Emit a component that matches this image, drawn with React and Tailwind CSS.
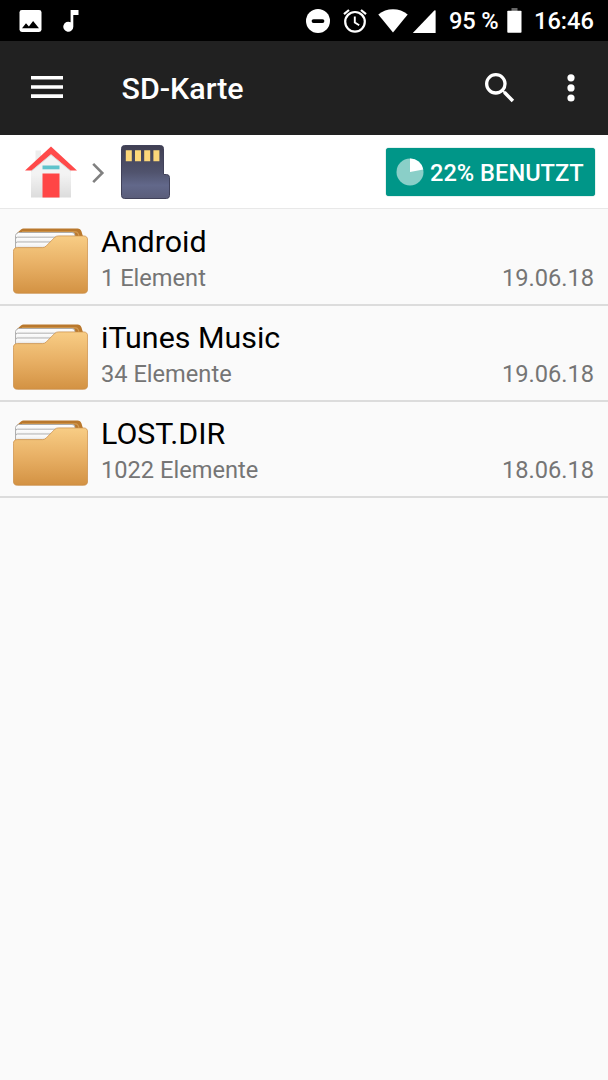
import React from 'react';

const files = [{
  name: 'Android',
  count: '1 Element',
  date: '19.06.18'
}, {
  name: 'iTunes Music',
  count: '34 Elemente',
  date: '19.06.18'
}, {
  name: 'LOST.DIR',
  count: '1022 Elemente',
  date: '18.06.18'
}];

function StatusBar() {
  return <div className="flex h-[41px] items-center bg-black pl-[19px] text-white">
      <svg className="h-[22px] w-[23px] shrink-0" viewBox="0 0 23 22">
        <rect x="0.5" y="0" width="22" height="22" rx="2.4" fill="#fff" />
        <path d="M3 18.3 7 13.2 9.9 16.6 14.1 11 20 18.3Z" fill="#000" />
      </svg>
      <svg className="ml-[21px] h-[22px] w-[16px] shrink-0" viewBox="0 0 16 22">
        <path d="M7.6 0v12.3a5 5 0 1 0 2.7 4.5V5H15.5V0Z" fill="#fff" />
      </svg>
      <svg className="ml-[227px] h-[24px] w-[24px] shrink-0" viewBox="0 0 24 24">
        <circle cx="12" cy="12" r="12" fill="#fff" />
        <rect x="5.6" y="10.2" width="12.8" height="3.8" rx="1.9" fill="#000" />
      </svg>
      <svg className="ml-[13px] h-[24px] w-[24px] shrink-0" viewBox="0 0 24 24" fill="none" stroke="#fff">
        <circle cx="12" cy="12.8" r="9.8" strokeWidth="2.2" />
        <path d="M11.8 7.5v6l4.4 2.8" strokeWidth="1.9" />
        <path d="M1 5.2 6 1M23 5.2 18 1" strokeWidth="2.2" />
      </svg>
      <svg className="ml-[11px] h-[24px] w-[30px] shrink-0" viewBox="0 0 30 24">
        <path d="M0.3 5.4C4.5 1.9 9.5.2 15 .2s10.5 1.7 14.7 5.2L15 23.4Z" fill="#fff" />
      </svg>
      <svg className="ml-[4px] h-[24px] w-[24px] shrink-0" viewBox="0 0 24 24">
        <path d="M.8 24 22.3 1.6Q23.6.5 23.6 2V24Z" fill="#fff" />
      </svg>
      <span className="ml-[13px] w-[50px] shrink-0 pt-px text-[23.64px] leading-[40px] font-medium tracking-[-0.2px] whitespace-nowrap">95 %</span>
      <svg className="ml-[8px] h-[25px] w-[15px] shrink-0" viewBox="0 0 15 25">
        <rect x="4.5" y="0" width="6" height="3" fill="#666" />
        <rect x="0.3" y="2.7" width="14.2" height="22" rx="0.8" fill="#fff" />
      </svg>
      <span className="ml-[12px] pt-px text-[23.64px] leading-[40px] font-medium whitespace-nowrap">16:46</span>
    </div>;
}

function Toolbar() {
  return <header className="flex h-[94px] items-center bg-[#212121] pl-[31px] text-white">
      <svg className="mb-[2px] h-[22px] w-[32px] shrink-0" viewBox="0 0 32 22">
        <path d="M0 0h32v3.6H0zM0 9.2h32v3.6H0zM0 18.3h32v3.6H0z" fill="#fff" />
      </svg>
      <h1 className="ml-[58.5px] flex-1 pt-[2px] text-[30.4px] leading-[36px] font-medium">SD-Karte</h1>
      <svg className="h-[40px] w-[40px] shrink-0" viewBox="0 0 24 24">
        <path d="M15.5 14h-.79l-.28-.27A6.471 6.471 0 0 0 16 9.5 6.5 6.5 0 1 0 9.5 16c1.61 0 3.09-.59 4.23-1.57l.27.28v.79l5 4.99L20.49 19l-4.99-5zm-6 0C7.01 14 5 11.99 5 9.5S7.01 5 9.5 5 14 7.01 14 9.5 11.99 14 9.5 14z" fill="#fff" />
      </svg>
      <svg className="mr-[33px] ml-[47px] h-[28px] w-[8px] shrink-0" viewBox="0 0 8 28">
        <circle cx="4" cy="3.8" r="3.6" fill="#fff" />
        <circle cx="4" cy="13.9" r="3.6" fill="#fff" />
        <circle cx="4" cy="24" r="3.6" fill="#fff" />
      </svg>
    </header>;
}

function HomeIcon() {
  return <svg className="mt-px h-[52px] w-[52px] shrink-0" viewBox="0 0 52 52">
      <defs>
        <linearGradient id="wall" x1="0" y1="0" x2="0" y2="1">
          <stop offset="0.5" stopColor="#f3f3f3" />
          <stop offset="1" stopColor="#dcdcdc" />
        </linearGradient>
      </defs>
      <path d="M10.5 4.5h5.5v12h-5.5z" fill="#ededed" />
      <path d="M26 5 46 22v29.500H6V22Z" fill="url(#wall)" />
      <path d="M0 24.400 26 .5 52 24.400h-6.5L26 8.200 6.5 24.400Z" fill="#ff4a4a" />
      <path d="M6.5 25 26 8.8l19.5 16.200" fill="none" stroke="#c9c9c9" strokeOpacity="0.6" />
      <path d="M17.5 19.5h17v3.8h-17z" fill="#5fc3cb" />
      <path d="M17.5 27.5h17v24h-17z" fill="#ff4646" />
    </svg>;
}

function SdIcon() {
  return <svg className="h-[54px] w-[49px] shrink-0" viewBox="0 0 49 54">
      <defs>
        <linearGradient id="card" x1="0" y1="0" x2="0" y2="1">
          <stop offset="0" stopColor="#403f52" />
          <stop offset="0.5" stopColor="#50536d" />
          <stop offset="0.75" stopColor="#62688a" />
          <stop offset="1" stopColor="#5a5d7a" />
        </linearGradient>
      </defs>
      <path d="M3.5.5h36q3 0 3 3v26h3q3 0 3 3V50.5q0 3-3 3h-42q-3 0-3-3v-47q0-3 3-3Z" fill="url(#card)" stroke="#41425a" />
      <path d="M4.8 5.2h6v11h-6zM14 5.2h6v11h-6zM23.2 5.2h6v11h-6zM32.4 5.2h6v11h-6z" fill="#fcd779" />
    </svg>;
}

function Breadcrumbs() {
  return <nav className="flex h-[74px] items-center border-b border-[#e8e8e8] bg-white pr-[13px] pl-[25px]">
      <HomeIcon />
      <svg className="mt-[2px] ml-[15px] h-[22px] w-[13px] shrink-0" viewBox="0 0 13 22">
        <path d="M1.2 1.8 10.3 11 1.2 20.2" fill="none" stroke="#808080" strokeWidth="2.6" />
      </svg>
      <div className="ml-[16px]">
        <SdIcon />
      </div>
      <button className="mt-px ml-auto flex h-[48px] w-[209px] items-center rounded-[3px] bg-[#009688] pl-[10px] text-white shadow-[0_0_1px_#00796b]">
        <svg className="h-[28px] w-[28px] shrink-0" viewBox="0 0 28 28">
          <circle cx="14" cy="14" r="13.5" fill="#8acfc8" />
          <path d="M14 14V.5A13.5 13.5 0 0 1 27.26 11.47Z" fill="#fff" />
        </svg>
        <span className="ml-[6px] pt-[2px] text-[23.64px] leading-[36px] font-medium whitespace-nowrap">22% BENUTZT</span>
      </button>
    </nav>;
}

function FolderIcon() {
  return <svg className="h-[66px] w-[75px] shrink-0" viewBox="0 0 75 66">
      <defs>
        <linearGradient id="front" x1="0" y1="0" x2="0" y2="1">
          <stop offset="0" stopColor="#f8cd85" />
          <stop offset="0.5" stopColor="#e8b065" />
          <stop offset="1" stopColor="#d39243" />
        </linearGradient>
        <linearGradient id="paper" x1="0" y1="0" x2="0" y2="1">
          <stop offset="0" stopColor="#fff" />
          <stop offset="0.4" stopColor="#f4f4f4" />
          <stop offset="1" stopColor="#c2c2c2" />
        </linearGradient>
      </defs>
      <path d="M4 5 8 1.500Q9 .5 10.500 .5h54q3 0 4 3l1.500 5v4H4Z" fill="#b9782d" />
      <path d="M9 3.8h53.500q3 0 3.500 5" fill="none" stroke="#d29a52" strokeWidth="1.2" />
      <g fill="url(#paper)" stroke="#a8a8a8" strokeWidth="0.9">
        <path d="M5.5 4.5h53.5q3 0 3 3v10H2.5v-10q0-2 3-3Z" />
        <path d="M4.5 9.200h42v10H2.5v-8q0-2 2-2Z" />
        <path d="M4.5 14h38v9H2.5v-7q0-2 2-2Z" />
      </g>
      <path d="M4.5 19.6H29.500Q31.500 19.6 33 18.200L41.700 9.400Q43.200 7.9 45.500 7.9H70.5Q74.6 7.9 74.6 12V61Q74.6 65.3 70.5 65.3H4.5Q.4 65.3.4 61V23.7Q.4 19.6 4.5 19.6Z" fill="url(#front)" stroke="#c98b43" strokeWidth="0.7" />
    </svg>;
}

export default function App() {
  return <div className="min-h-screen w-[608px] bg-[#fafafa] font-[Roboto,sans-serif]">
      <StatusBar />
      <Toolbar />
      <Breadcrumbs />
      <main className="pt-px">
        {files.map(file => <div key={file.name} className="flex h-[96px] items-start border-b-2 border-[#dcdcdc] pr-[14px] pl-[13px]">
            <div className="pt-[18px]">
              <FolderIcon />
            </div>
            <div className="ml-[13px] flex-1 pt-[14px]">
              <div className="text-[30.4px] leading-[36px] text-black">{file.name}</div>
              <div className="flex justify-between text-[23.64px] leading-[36px] text-[#757575]">
                <span>{file.count}</span>
                <span>{file.date}</span>
              </div>
            </div>
          </div>)}
      </main>
    </div>;
}
